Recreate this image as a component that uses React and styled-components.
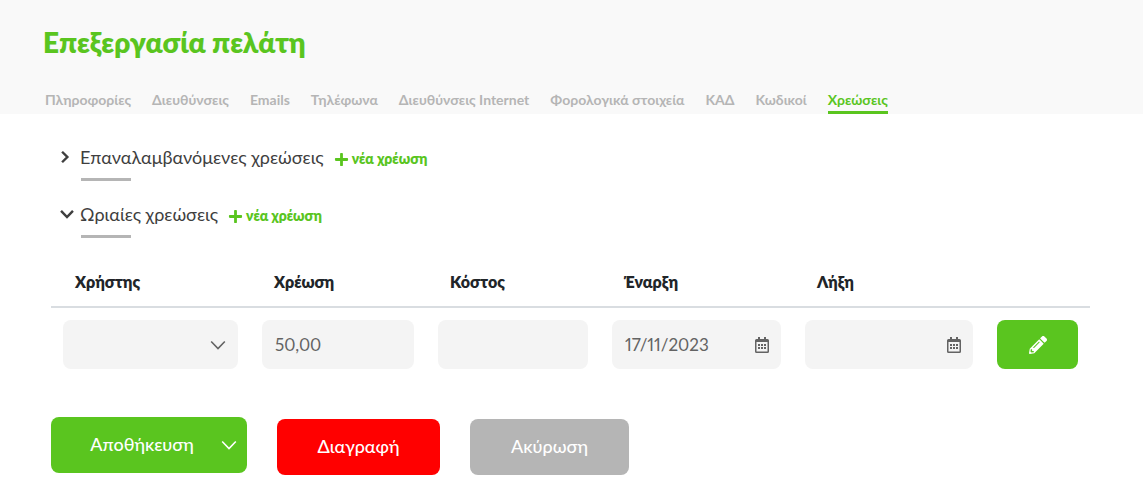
import React from 'react';
import styled, { createGlobalStyle } from 'styled-components';
import { FaPlus, FaPencilAlt } from 'react-icons/fa';

const COLORS = {
  green: '#5ac51f',
  red: '#ff0000',
  gray: '#b5b5b5',
  lightGray: '#f9f9f9',
  field: '#f4f4f4',
  border: '#d9dde1',
  text: '#3f3f3f',
  fieldText: '#636363',
  heading: '#212529',
};

const GlobalStyle = createGlobalStyle`
  * {
    box-sizing: border-box;
  }

  body {
    margin: 0;
    background: white;
    color: ${COLORS.text};
    font-family: Lato, 'Open Sans', sans-serif;
    font-size: 18px;
  }

  button, input, select {
    font: inherit;
  }
`;

const Header = styled.header`
  padding: 24px 43px 0;
  background: ${COLORS.lightGray};
`;

const Title = styled.h1`
  margin: 0;
  color: ${COLORS.green};
  font-size: 28px;
  font-weight: 800;
  line-height: 36px;
`;

const Tabs = styled.nav`
  display: flex;
  gap: 21px;
  padding: 30px 2px 0;
`;

const Tab = styled.a`
  height: 24px;
  border-bottom: 3px solid ${props => props.$active ? COLORS.green : 'transparent'};
  color: ${props => props.$active ? COLORS.green : COLORS.gray};
  font-size: 14px;
  font-weight: 700;
  line-height: 20px;
  text-decoration: none;
  white-space: nowrap;
`;

const Main = styled.main`
  padding: 31px 53px 24px 51px;
`;

const Section = styled.section`
  display: grid;
  grid-template-columns: 20px 1fr;
  align-items: center;
  align-content: start;
  height: 57px;
  padding-left: 9px;
`;

const ToggleButton = styled.button`
  display: flex;
  align-items: center;
  width: 16px;
  height: 24px;
  padding: 0;
  border: none;
  background: none;
  color: ${COLORS.text};
`;

const SectionHeading = styled.div`
  display: flex;
  align-items: flex-end;
  gap: 10px;
`;

const SectionTitle = styled.h2`
  margin: 0;
  font-size: 18px;
  font-weight: 400;
  line-height: 24px;
`;

const AddLink = styled.a`
  display: flex;
  align-items: center;
  gap: 3px;
  color: ${COLORS.green};
  font-size: 14px;
  font-weight: 800;
  line-height: 20px;
  text-decoration: none;
`;

const Underline = styled.div`
  grid-column: 2;
  width: 50px;
  height: 3px;
  margin: 9px 0 0 1px;
  background: ${COLORS.gray};
`;

const Table = styled.table`
  width: 100%;
  table-layout: fixed;
  border-collapse: collapse;
`;

const HeadCell = styled.th`
  width: ${props => props.$width}px;
  height: 48px;
  padding: 0 24px 2px;
  border-bottom: 2px solid ${COLORS.border};
  color: ${COLORS.heading};
  font-size: 16px;
  font-weight: 800;
  text-align: left;
`;

const Cell = styled.td`
  padding: 12px;
`;

const Field = styled.div`
  display: flex;
  align-items: center;
  position: relative;
  height: 49px;
  border-radius: 8px;
  background: ${COLORS.field};
  color: ${COLORS.fieldText};
`;

const Input = styled.input`
  flex: 1;
  min-width: 0;
  height: 100%;
  padding: 0 13px;
  border: none;
  border-radius: 8px;
  background: none;
  color: inherit;
  font-size: 17px;
  font-variant-numeric: proportional-nums;
`;

const Select = styled.select`
  width: 100%;
  height: 100%;
  padding: 0 40px 0 12px;
  border: none;
  border-radius: 8px;
  background: none;
  color: inherit;
  appearance: none;
`;

const FieldIcon = styled.span`
  position: absolute;
  right: 12px;
  display: flex;
  pointer-events: none;
`;

const EditButton = styled.button`
  display: flex;
  align-items: center;
  justify-content: center;
  width: 100%;
  height: 49px;
  border: none;
  border-radius: 8px;
  background: ${COLORS.green};
  color: white;
`;

const Actions = styled.div`
  display: flex;
  align-items: flex-end;
  gap: 30px;
  padding-top: 36px;
`;

const SplitButton = styled.div`
  display: flex;
  margin-bottom: 2px;
  border-radius: 8px;
  background: ${COLORS.green};
`;

const Button = styled.button`
  min-width: ${props => props.$width}px;
  height: 56px;
  padding: 0 0 2px;
  border: none;
  border-radius: 8px;
  background: ${props => props.$color};
  color: white;
  font-weight: 500;
`;

const SaveButton = styled(Button)`
  padding-left: 12px;
`;

const MenuButton = styled.button`
  display: flex;
  align-items: center;
  padding: 0 10px 0 0;
  border: none;
  background: none;
  color: white;
`;

const Chevron = ({ right, strokeWidth = 2, size = 16 }) => (
  <svg
    width={size}
    height={size}
    viewBox="0 0 16 16"
    fill="none"
    stroke="currentColor"
    strokeWidth={strokeWidth}
    aria-hidden="true"
  >
    <path d={right ? 'M2.400 2L8.400 8l-6 6' : 'M1.200 4.500L8 11.500l6.800-7'} />
  </svg>
);

const Calendar = () => (
  <svg width="14" height="16" viewBox="0 0 14 16" fill="currentColor" aria-hidden="true">
    <path d="M3 0h2v2h4V0h2v2h1.500Q14 2 14 3.500v11q0 1.500-1.500 1.500h-11Q0 16 0 14.500v-11Q0 2 1.500 2H3zM1.500 5v9.500h11V5z" fillRule="evenodd" />
    <path d="M3 7h2v2H3zM6 7h2v2H6zM9 7h2v2H9zM3 10h2v2H3zM6 10h2v2H6zM9 10h2v2H9z" />
  </svg>
);

const TABS = [
  'Πληροφορίες',
  'Διευθύνσεις',
  'Emails',
  'Τηλέφωνα',
  'Διευθύνσεις Internet',
  'Φορολογικά στοιχεία',
  'ΚΑΔ',
  'Κωδικοί',
  'Χρεώσεις',
];

const ChargeSection = ({ title, open }) => (
  <Section>
    <ToggleButton type="button" aria-label={title} aria-expanded={!!open}>
      <Chevron right={!open} strokeWidth={2.8} size={14} />
    </ToggleButton>
    <SectionHeading>
      <SectionTitle>{title}</SectionTitle>
      <AddLink href="#new">
        <FaPlus size={15} />
        νέα χρέωση
      </AddLink>
    </SectionHeading>
    <Underline />
  </Section>
);

const DateField = ({ label, value }) => (
  <Field>
    <Input aria-label={label} defaultValue={value} />
    <FieldIcon>
      <Calendar />
    </FieldIcon>
  </Field>
);

const App = () => (
  <>
    <GlobalStyle />
    <Header>
      <Title>Επεξεργασία πελάτη</Title>
      <Tabs>
        {TABS.map(tab => (
          <Tab key={tab} href="#tab" $active={tab === 'Χρεώσεις'}>{tab}</Tab>
        ))}
      </Tabs>
    </Header>
    <Main>
      <ChargeSection title="Επαναλαμβανόμενες χρεώσεις" />
      <ChargeSection title="Ωριαίες χρεώσεις" open />
      <Table>
        <thead>
          <tr>
            <HeadCell $width={199}>Χρήστης</HeadCell>
            <HeadCell $width={176}>Χρέωση</HeadCell>
            <HeadCell $width={174}>Κόστος</HeadCell>
            <HeadCell $width={193}>Έναρξη</HeadCell>
            <HeadCell $width={192}>Λήξη</HeadCell>
            <HeadCell $width={105} />
          </tr>
        </thead>
        <tbody>
          <tr>
            <Cell>
              <Field>
                <Select aria-label="Χρήστης" />
                <FieldIcon>
                  <Chevron strokeWidth={1.6} />
                </FieldIcon>
              </Field>
            </Cell>
            <Cell>
              <Field>
                <Input aria-label="Χρέωση" defaultValue="50,00" />
              </Field>
            </Cell>
            <Cell>
              <Field>
                <Input aria-label="Κόστος" />
              </Field>
            </Cell>
            <Cell>
              <DateField label="Έναρξη" value="17/11/2023" />
            </Cell>
            <Cell>
              <DateField label="Λήξη" />
            </Cell>
            <Cell>
              <EditButton type="button" aria-label="Επεξεργασία">
                <FaPencilAlt size={18} />
              </EditButton>
            </Cell>
          </tr>
        </tbody>
      </Table>
      <Actions>
        <SplitButton>
          <SaveButton type="button" $width={170} $color="transparent">Αποθήκευση</SaveButton>
          <MenuButton type="button" aria-label="Περισσότερα">
            <Chevron strokeWidth={1.6} />
          </MenuButton>
        </SplitButton>
        <Button type="button" $width={163} $color={COLORS.red}>Διαγραφή</Button>
        <Button type="button" $width={159} $color={COLORS.gray}>Ακύρωση</Button>
      </Actions>
    </Main>
  </>
);

export default App;
